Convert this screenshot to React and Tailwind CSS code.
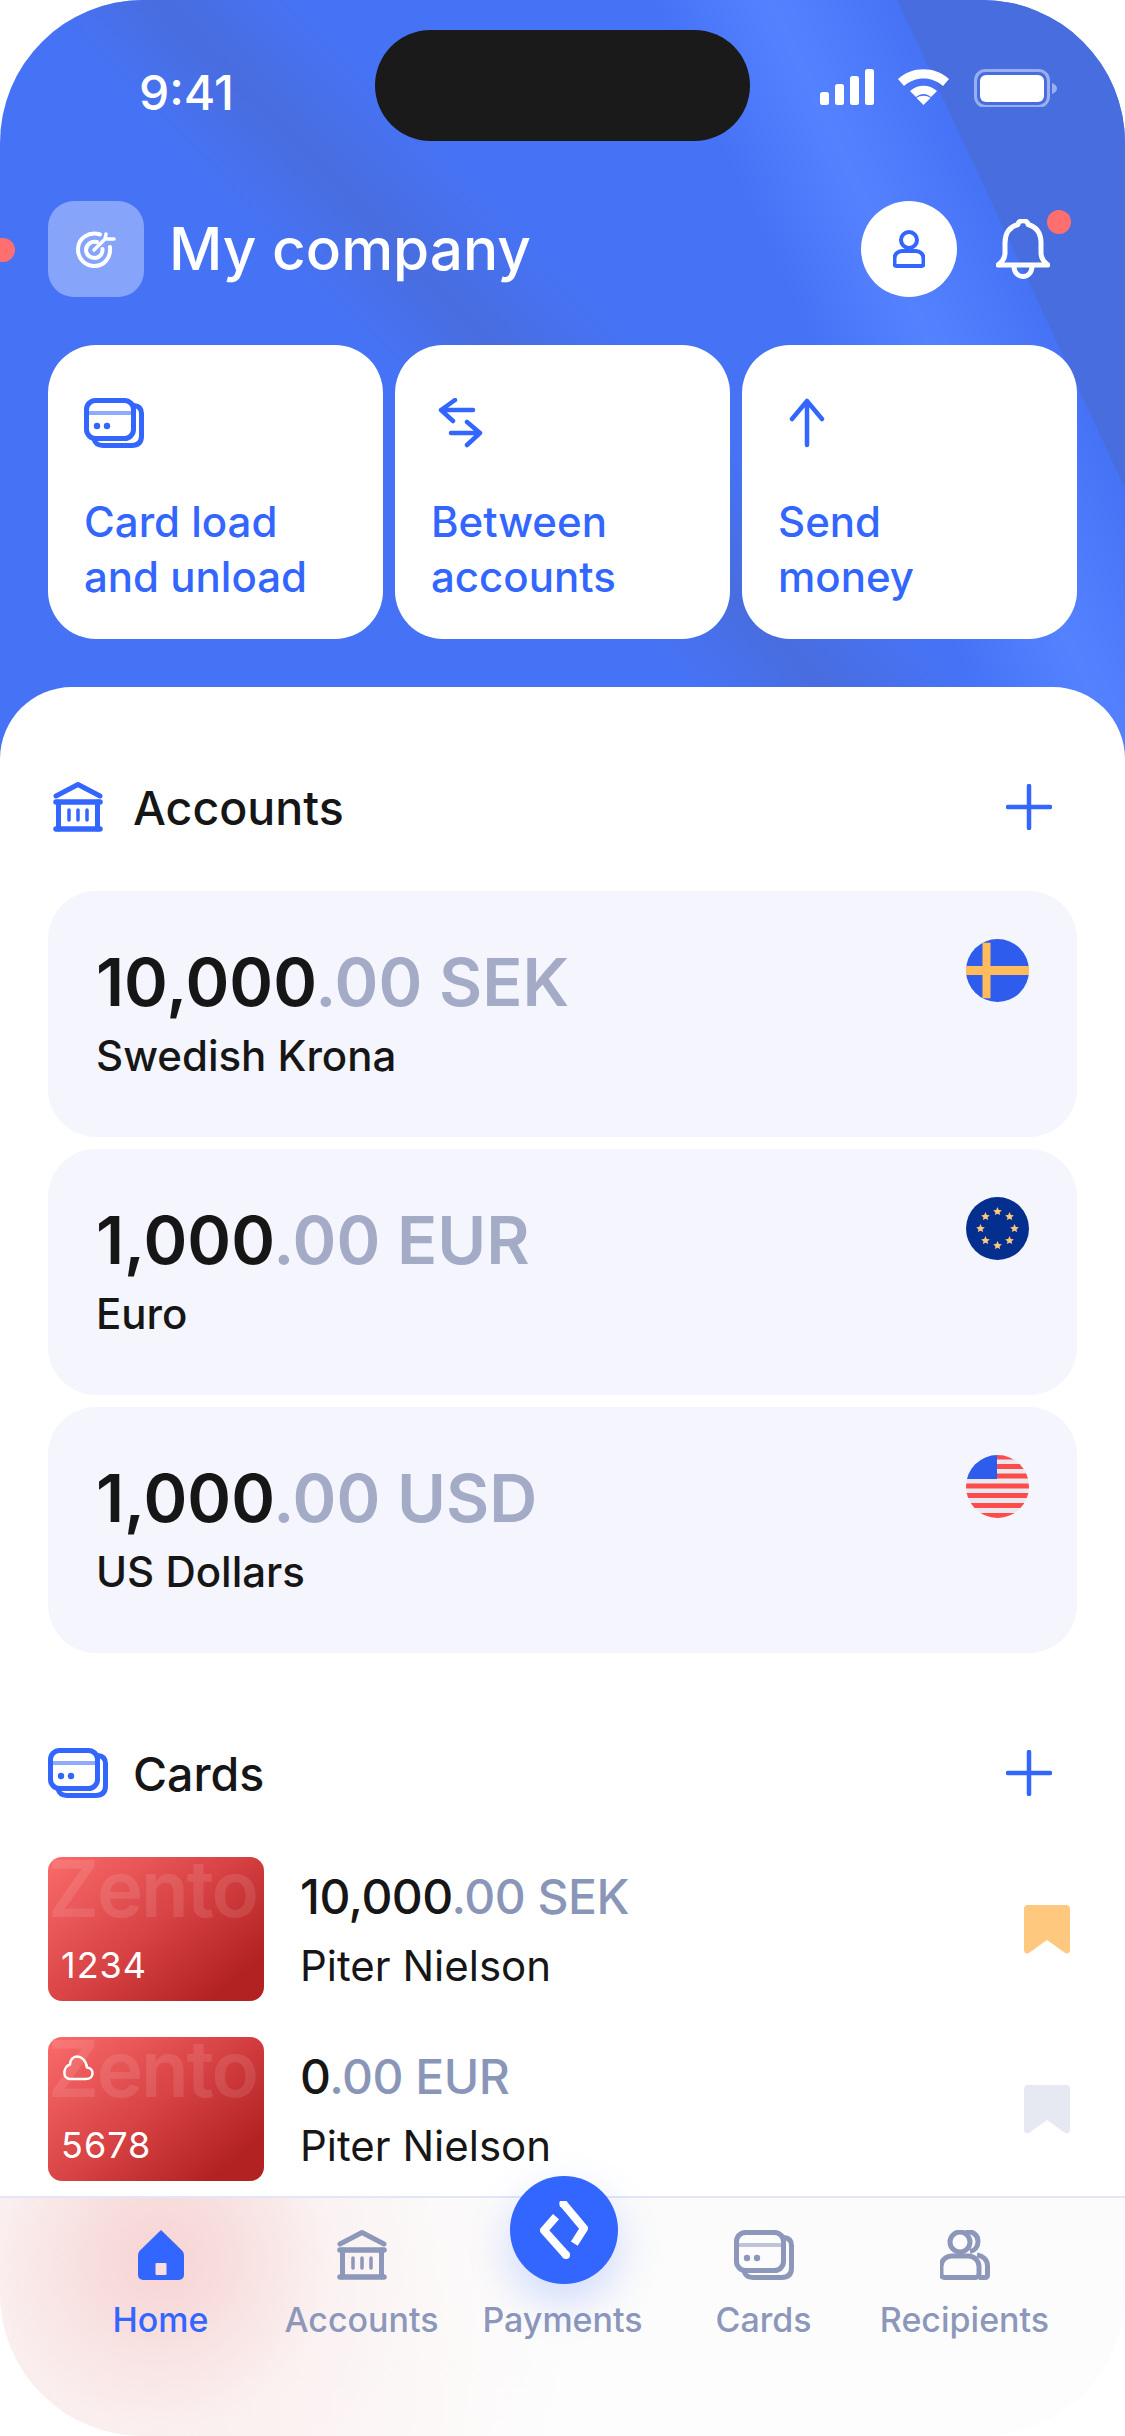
import React from "react";

const BLUE = "#3366ff";
const GRAY = "#8c97ba";

const CardsIcon = ({ color = BLUE, className = "" }) => (
  <svg className={className} viewBox="0 0 60 50" fill="none" stroke={color} strokeWidth="5" strokeLinejoin="round">
    <path d="M50 7.500c5 .5 7.500 3 7.500 8V38c0 6.500-3.500 9.500-10 9.500H19c-5 0-8-2.500-9-6.500" strokeLinecap="round" />
    <rect x="2.500" y="2.500" width="47" height="38" rx="9" />
    <path d="M2.500 15h47" strokeWidth="4" opacity=".55" />
    <circle cx="13" cy="28" r="3.200" fill={color} stroke="none" />
    <circle cx="23" cy="28" r="3.200" fill={color} stroke="none" />
  </svg>
);

const BankIcon = ({ color = BLUE, className = "" }) => (
  <svg className={className} viewBox="0 0 50 50" fill="none" stroke={color} strokeWidth="5" strokeLinecap="round" strokeLinejoin="round">
    <path d="M3 14 25 2.500 47 14" />
    <path d="M3 20h44" strokeWidth="5.500" />
    <path d="M5.500 20v27M44.500 20v27" />
    <path d="M3 47h44" strokeWidth="5.500" />
    <path d="M16 28v10M25 28v10M34 28v10" strokeWidth="3.500" />
  </svg>
);

const PlusIcon = () => (
  <svg className="w-[46px] h-[46px]" viewBox="0 0 46 46" fill="none" stroke={BLUE} strokeWidth="4.500" strokeLinecap="round">
    <path d="M23 2v42M2 23h42" />
  </svg>
);

const SwedenFlag = () => (
  <svg className="w-[63px] h-[63px]" viewBox="0 0 63 63">
    <circle cx="31.500" cy="31.500" r="31.500" fill="#2e5cec" />
    <path d="M16.500 3.700h8v55.600h-8zM0 27h63v9H0z" fill="#ffbb5c" />
  </svg>
);

const EuFlag = () => {
  const stars = [0, 1, 2, 3, 4, 5, 6, 7].map((i) => {
    const a = (i * Math.PI) / 4;
    return [31.5 + 17 * Math.sin(a), 31.5 - 17 * Math.cos(a)];
  });
  return (
    <svg className="w-[63px] h-[63px]" viewBox="0 0 63 63">
      <circle cx="31.500" cy="31.500" r="31.500" fill="#052f8f" />
      {stars.map(([x, y]) => (
        <path
          key={`${x}-${y}`}
          transform={`translate(${x} ${y})`}
          d="M0-4.400 1.300-1.400 4.300-1.200 2 .9 2.700 3.600 0 2.200-2.700 3.600-2 .9-4.300-1.200-1.300-1.400z"
          fill="#ffc97a"
        />
      ))}
    </svg>
  );
};

const UsFlag = () => (
  <svg className="w-[63px] h-[63px]" viewBox="0 0 63 63">
    <defs>
      <clipPath id="usClip">
        <circle cx="31.500" cy="31.500" r="31.500" />
      </clipPath>
    </defs>
    <g clipPath="url(#usClip)">
      <rect width="63" height="63" fill="#e8e8ee" />
      <path d="M31 0h32v4.500H31zM31 9h32v5H31zM31 18.500h32v5H31zM0 28.500h63v5H0zM0 38h63v5H0zM0 48h63v5H0zM0 58h63v5H0z" fill="#ff4b4b" />
      <rect width="31" height="24" fill="#2e5cec" />
    </g>
  </svg>
);

const Bookmark = ({ color }) => (
  <svg className="w-[46px] h-[49px]" viewBox="0 0 46 49">
    <path d="M4 0h38a4 4 0 0 1 4 4v41c0 3.500-3 4.500-5.500 2.500L23 35 5.500 47.500C3 49.500 0 48.500 0 45V4a4 4 0 0 1 4-4z" fill={color} />
  </svg>
);

const ACCOUNTS = [
  { whole: "10,000", rest: ".00 SEK", name: "Swedish Krona", Flag: SwedenFlag },
  { whole: "1,000", rest: ".00 EUR", name: "Euro", Flag: EuFlag },
  { whole: "1,000", rest: ".00 USD", name: "US Dollars", Flag: UsFlag },
];

const SectionHeader = ({ icon, title }) => (
  <div className="flex items-center h-[60px]">
    <div className="w-[85px] flex items-center">{icon}</div>
    <h2 className="pt-[2px] text-[46.5px] leading-[60px] font-medium text-[#161616] flex-1">{title}</h2>
    <div className="mr-[25px]"><PlusIcon /></div>
  </div>
);

const BankCard = ({ number, whole, rest, cloud, mark }) => (
  <div className="flex items-center">
    <div className="relative w-[216px] h-[144px] rounded-[14px] overflow-hidden bg-[linear-gradient(140deg,#fa6b6b_0%,#d84345_48%,#b32222_86%)] shrink-0">
      <span className="absolute left-0 top-[1px] text-[78px] leading-[62px] font-semibold text-white/10 tracking-[-2px]">Zento</span>
      {cloud && (
        <svg className="absolute left-[14px] top-[18px] w-[32px] h-[26px]" viewBox="0 0 32 26" fill="none" stroke="#fff" strokeWidth="2.500" strokeLinejoin="round">
          <path d="M8 24h16c8.500 0 8.500-11 1-11.500C24 5 19 1.500 15 1.500c-4 0-7 3.500-7 8-7 2-8 14.500 0 14.500z" />
        </svg>
      )}
      <span className="absolute left-[13px] bottom-[14px] text-[36px] leading-[44px] text-white tracking-[1px]">{number}</span>
    </div>
    <div className="ml-[36px] flex-1">
      <p className="text-[48px] leading-[60px] font-medium tracking-[-0.5px] text-[#161616]">
        {whole}<span className="text-[#8a96b8]">{rest}</span>
      </p>
      <p className="mt-[14px] text-[42px] leading-[50px] text-[#161616]">Piter Nielson</p>
    </div>
    <div className="mr-[7px]"><Bookmark color={mark} /></div>
  </div>
);

const NavItem = ({ label, active, children }) => (
  <div className="w-[201px] flex flex-col items-center">
    <div className="h-[52px] flex items-end justify-center">{children}</div>
    <span className={`mt-[20px] text-[34px] leading-[40px] font-medium ${active ? "text-[#3366ff]" : "text-[#8c97ba]"}`}>{label}</span>
  </div>
);

export default function App() {
  return (
    <div className="w-[1125px] h-[2436px] flex flex-col overflow-hidden rounded-[143px] bg-white font-['Inter',sans-serif] relative">
      {/* header */}
      <div className="relative h-[760px] shrink-0 px-[48px] bg-[linear-gradient(65deg,transparent_84.6%,#486ddf_84.6%),linear-gradient(65deg,transparent_68%,#5482ff_76%,transparent_84.6%),linear-gradient(46deg,transparent_41%,#486ddf_48%,transparent_56%),linear-gradient(#4673f6,#4673f6)]">
        <span className="absolute left-[-9px] top-[238px] w-[24px] h-[24px] rounded-full bg-[#ff6f6f]" />
        <div className="flex items-start justify-between pt-[30px] h-[201px]">
          <span className="w-[327px] pl-[91px] pt-[34px] text-[48px] leading-[58px] font-medium text-white">9:41</span>
          <div className="w-[375px] h-[111px] rounded-[56px] bg-[#1a1a1a]" />
          <div className="w-[327px] pl-[70px] pt-[39px]">
            <svg className="w-[237px] h-[38px]" viewBox="0 0 237 38">
              <rect x="0" y="23" width="9" height="13" rx="2.500" fill="#fff" />
              <rect x="15" y="15" width="9" height="21" rx="2.500" fill="#fff" />
              <rect x="30" y="7" width="9" height="29" rx="2.500" fill="#fff" />
              <rect x="45" y="0" width="9" height="36" rx="2.500" fill="#fff" />
              <path d="M78 10C92-3 115-3 129 10l-6 7C112 7 95 7 84 17z" fill="#fff" />
              <path d="M90 22c8-7 19-7 27 0l-6 6c-5-4-10-4-15 0z" fill="#fff" />
              <path d="M103.500 36l-7-7c4-3 10-3 14 0z" fill="#fff" />
              <rect x="155.500" y="1.500" width="73" height="36" rx="10" fill="none" stroke="#fff" strokeOpacity=".45" strokeWidth="3" />
              <rect x="160" y="6" width="64" height="27" rx="6" fill="#fff" />
              <path d="M232 14c3 1 5 3 5 5.500S235 24 232 25z" fill="#fff" fillOpacity=".45" />
            </svg>
          </div>
        </div>

        <div className="flex items-center h-[96px]">
          <div className="w-[96px] h-[96px] rounded-[26px] bg-white/35 flex items-center justify-center">
            <svg className="w-[40px] h-[38px]" viewBox="0 0 40 38" fill="none" stroke="#fff" strokeWidth="4" strokeLinecap="round">
              <path d="M24 4.500C13 1 2 8 2 19.500 2 29 9.500 36 18.500 36 28 36 35 28 34 17" />
              <path d="M21 12c-6-1.500-11 3-11 8 0 4.500 4 8 8.500 8 5 0 8.500-4.500 8-9" />
              <path d="M18 20 29 9M29 9l1-5M29 9h9" strokeWidth="3.500" />
            </svg>
          </div>
          <h1 className="ml-[25px] flex-1 text-[58.5px] leading-[72px] font-medium text-white">My company</h1>
          <div className="w-[96px] h-[96px] rounded-full bg-white flex items-center justify-center">
            <svg className="w-[32px] h-[38px]" viewBox="0 0 32 38" fill="none" stroke={BLUE} strokeWidth="4">
              <circle cx="16" cy="10" r="8" />
              <path d="M9 21h14a7.500 7.500 0 0 1 7.500 7.500V34a2 2 0 0 1-2 2h-25a2 2 0 0 1-2-2v-5.500A7.500 7.500 0 0 1 9 21z" />
            </svg>
          </div>
          <div className="relative w-[120px] flex justify-center">
            <svg className="w-[54px] h-[60px] ml-[12px]" viewBox="0 0 54 60" fill="none" stroke="#fff" strokeWidth="5" strokeLinecap="round" strokeLinejoin="round">
              <path d="M2 46c4-3 7-6 7-12V24C9 13 15 7.500 22 5.500c0-5 10-5 10 0C39 7.500 45 13 45 24v10c0 6 3 9 7 12z" />
              <path d="M18 47c0 14 18 14 18 0" />
            </svg>
            <span className="absolute right-[6px] top-[-9px] w-[24px] h-[24px] rounded-full bg-[#ff6f6f]" />
          </div>
        </div>

        <div className="mt-[48px] grid grid-cols-3 gap-[12px]">
          <div className="h-[294px] rounded-[48px] bg-white pl-[36px] pt-[53px]">
            <CardsIcon className="w-[60px] h-[50px]" />
            <p className="mt-[46px] text-[42px] leading-[55px] font-medium text-[#3366ff]">Card load<br />and unload</p>
          </div>
          <div className="h-[294px] rounded-[48px] bg-white pl-[36px] pt-[53px]">
            <svg className="w-[52px] h-[50px]" viewBox="0 0 52 50" fill="none" stroke={BLUE} strokeWidth="4.500" strokeLinecap="round" strokeLinejoin="round">
              <path d="M42 12H10M24 2 10 12l12 11" />
              <path d="M20 35h29M36 24l13 11-13 12" />
            </svg>
            <p className="mt-[46px] text-[42px] leading-[55px] font-medium text-[#3366ff]">Between<br />accounts</p>
          </div>
          <div className="h-[294px] rounded-[48px] bg-white pl-[36px] pt-[53px]">
            <svg className="w-[50px] h-[50px]" viewBox="0 0 50 50" fill="none" stroke={BLUE} strokeWidth="4.500" strokeLinecap="round" strokeLinejoin="round">
              <path d="M29 47V3M14 21 29 3l15 18" />
            </svg>
            <p className="mt-[46px] text-[42px] leading-[55px] font-medium text-[#3366ff]">Send<br />money</p>
          </div>
        </div>
      </div>

      {/* sheet */}
      <div className="relative flex-1 min-h-0 mt-[-73px] rounded-t-[72px] bg-white px-[48px] pt-[90px]">
        <SectionHeader icon={<BankIcon className="w-[50px] h-[50px] ml-[5px]" />} title="Accounts" />
        <div className="mt-[54px] flex flex-col gap-[12px]">
          {ACCOUNTS.map(({ whole, rest, name, Flag }) => (
            <div key={name} className="h-[246px] rounded-[48px] bg-[#f4f5fd] pl-[48px] pr-[48px] pt-[51px] flex justify-between">
              <div>
                <p className="text-[66.5px] leading-[80px] font-semibold text-[#161616]">
                  {whole}<span className="text-[#a3abc7]">{rest}</span>
                </p>
                <p className="mt-[9px] text-[42px] leading-[50px] font-medium text-[#161616]">{name}</p>
              </div>
              <div className="mt-[-3px]"><Flag /></div>
            </div>
          ))}
        </div>

        <div className="mt-[90px]">
          <SectionHeader icon={<CardsIcon className="w-[60px] h-[50px]" />} title="Cards" />
        </div>
        <div className="mt-[54px] flex flex-col gap-[36px]">
          <BankCard number="1234" whole="10,000" rest=".00 SEK" mark="#ffc87f" />
          <BankCard number="5678" whole="0" rest=".00 EUR" cloud mark="#e6e9f2" />
        </div>
      </div>

      {/* tab bar */}
      <div className="relative h-[240px] shrink-0 border-t-2 border-[#e3e6f5] bg-[radial-gradient(circle_at_160px_60px,#f7d3d3_0%,#f8dede_70px,rgba(250,240,240,0.6)_170px,transparent_260px),radial-gradient(circle_at_0px_240px,#fae8e8_0%,transparent_560px),linear-gradient(#fbfbfb,#fdfdfd)] px-[60px] pt-[30px] flex">
        <NavItem label="Home" active>
          <svg className="w-[46px] h-[50px]" viewBox="0 0 46 50">
            <path d="M23 0 43.500 20c1.600 1.600 2.500 3.500 2.500 5.500V45a5 5 0 0 1-5 5H5a5 5 0 0 1-5-5V25.500c0-2 .900-3.900 2.500-5.500z" fill={BLUE} />
            <rect x="17.500" y="33" width="11" height="12" rx="1" fill="#f8dede" />
          </svg>
        </NavItem>
        <NavItem label="Accounts">
          <BankIcon color={GRAY} className="w-[50px] h-[50px]" />
        </NavItem>
        <NavItem label="Payments">
          <div className="w-[50px] h-[50px]" />
        </NavItem>
        <NavItem label="Cards">
          <CardsIcon color={GRAY} className="w-[60px] h-[50px]" />
        </NavItem>
        <NavItem label="Recipients">
          <svg className="w-[50px] h-[50px]" viewBox="0 0 50 50" fill="none" stroke={GRAY} strokeWidth="5">
            <path d="M26 2.500c6-2 12 2 12 9 0 5-3 9-8 10" />
            <path d="M37 25c6 1 10.500 5 10.500 11v9c0 1.500-1 2.500-2.500 2.500h-6" />
            <circle cx="20" cy="12" r="10" />
            <path d="M12 26h16c6 0 11 4.500 11 10.500V44c0 2-1.500 3.500-3.500 3.500h-31C2.500 47.500 1 46 1 44v-7.500C1 30.500 6 26 12 26z" />
          </svg>
        </NavItem>
        <div className="absolute left-[510px] top-[-22px] w-[108px] h-[108px] rounded-full bg-[#3366ff] shadow-[0_18px_44px_rgba(51,102,255,0.22)] flex items-center justify-center">
          <svg className="w-[48px] h-[58px]" viewBox="0 0 48 58" fill="none" stroke="#fff" strokeWidth="8" strokeLinejoin="round">
            <path d="M23.300 2.700 44 27.300 34.300 42.700" />
            <path d="M26 54 4 29.300 16 15.700" />
            <circle cx="23.300" cy="2.700" r="4" fill="#fff" stroke="none" />
            <circle cx="26" cy="54" r="4" fill="#fff" stroke="none" />
          </svg>
        </div>
      </div>
    </div>
  );
}
